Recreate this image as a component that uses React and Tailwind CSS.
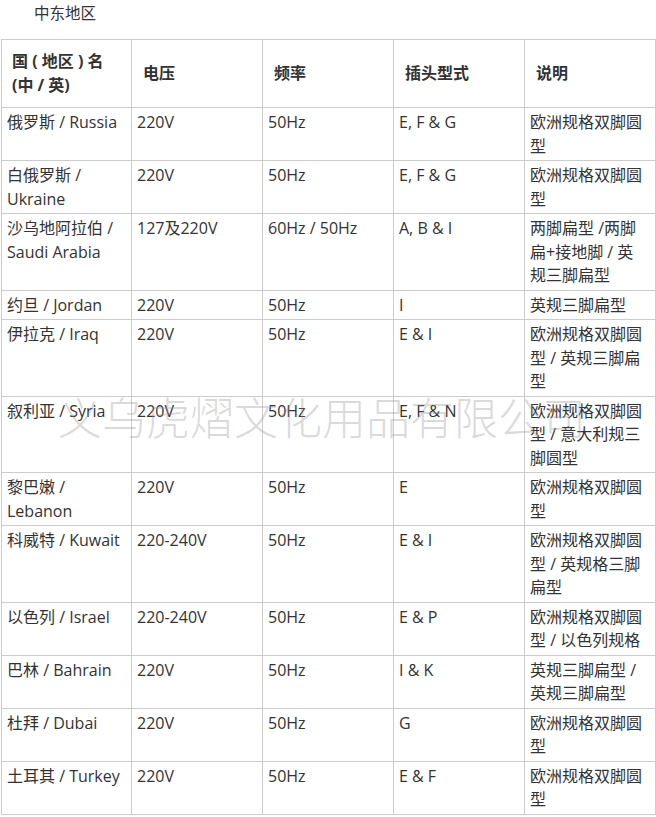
import React from "react";

const rows = [
  [["俄罗斯 / Russia"], ["220V"], ["50Hz"], ["E, F & G"], ["欧洲规格双脚圆", "型"]],
  [["白俄罗斯 /", "Ukraine"], ["220V"], ["50Hz"], ["E, F & G"], ["欧洲规格双脚圆", "型"]],
  [["沙乌地阿拉伯 /", "Saudi Arabia"], ["127及220V"], ["60Hz / 50Hz"], ["A, B & I"], ["两脚扁型 /两脚", "扁+接地脚 / 英", "规三脚扁型"]],
  [["约旦 / Jordan"], ["220V"], ["50Hz"], ["I"], ["英规三脚扁型"]],
  [["伊拉克 / Iraq"], ["220V"], ["50Hz"], ["E & I"], ["欧洲规格双脚圆", "型 / 英规三脚扁", "型"]],
  [["叙利亚 / Syria"], ["220V"], ["50Hz"], ["E, F & N"], ["欧洲规格双脚圆", "型 / 意大利规三", "脚圆型"]],
  [["黎巴嫩 /", "Lebanon"], ["220V"], ["50Hz"], ["E"], ["欧洲规格双脚圆", "型"]],
  [["科威特 / Kuwait"], ["220-240V"], ["50Hz"], ["E & I"], ["欧洲规格双脚圆", "型 / 英规格三脚", "扁型"]],
  [["以色列 / Israel"], ["220-240V"], ["50Hz"], ["E & P"], ["欧洲规格双脚圆", "型 / 以色列规格"]],
  [["巴林 / Bahrain"], ["220V"], ["50Hz"], ["I & K"], ["英规三脚扁型 /", "英规三脚扁型"]],
  [["杜拜 / Dubai"], ["220V"], ["50Hz"], ["G"], ["欧洲规格双脚圆", "型"]],
  [["土耳其 / Turkey"], ["220V"], ["50Hz"], ["E & F"], ["欧洲规格双脚圆", "型"]],
];

export default function App() {
  return (
    <div className="relative w-[656px] h-[817px] overflow-hidden bg-white text-[#333] text-[16px] font-['Open_Sans','Noto_Sans_CJK_SC',sans-serif]">
      <div className="h-[39px] pl-[34px] leading-[26px] text-[15.5px]">中东地区</div>
      <table className="ml-px w-[654px] table-fixed border-collapse">
        <colgroup>
          <col className="w-[130px]" />
          <col className="w-[131px]" />
          <col className="w-[131px]" />
          <col className="w-[131px]" />
          <col className="w-[131px]" />
        </colgroup>
        <thead>
          <tr>
            <th className="border border-[#cccccc] px-[10px] py-[10px] text-left align-middle font-bold leading-[23.5px]">
              <div>国 ( 地区 ) 名</div>
              <div>(中 / 英)</div>
            </th>
            <th className="border border-[#cccccc] px-[11px] py-[10px] text-left align-middle font-bold leading-[23.5px]">电压</th>
            <th className="border border-[#cccccc] px-[11px] py-[10px] text-left align-middle font-bold leading-[23.5px]">频率</th>
            <th className="border border-[#cccccc] px-[11px] py-[10px] text-left align-middle font-bold leading-[23.5px]">插头型式</th>
            <th className="border border-[#cccccc] px-[11px] py-[10px] text-left align-middle font-bold leading-[23.5px]">说明</th>
          </tr>
        </thead>
        <tbody>
          {rows.map((r, i) => (
            <tr key={i}>
              {r.map((lines, j) => (
                <td
                  key={j}
                  className="border border-[#cccccc] pl-[5px] pr-[3px] pt-[3px] pb-[2px] align-top leading-[23.5px]"
                >
                  {lines.map((l, k) => (
                    <div key={k} className="whitespace-nowrap">{l}</div>
                  ))}
                </td>
              ))}
            </tr>
          ))}
        </tbody>
      </table>
      <div className="pointer-events-none absolute left-[58px] top-[388px] whitespace-nowrap text-[44px] font-light leading-[56px] text-[rgba(150,150,150,0.35)] font-['Noto_Sans_CJK_SC',sans-serif]">
        义乌虎熠文化用品有限公司
      </div>
    </div>
  );
}
